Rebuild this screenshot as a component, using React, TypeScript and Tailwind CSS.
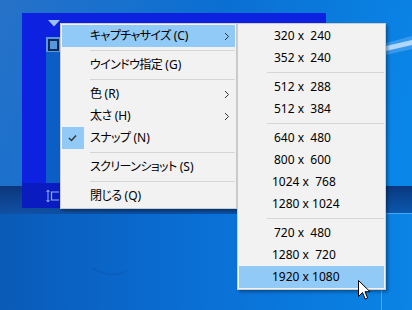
type MenuEntry =
  | { sep: true }
  | { sep?: false; label: string; key?: string; sub?: boolean; active?: boolean; checked?: boolean; pad?: string };

const mainItems: MenuEntry[] = [
  { label: "キャプチャサイズ", key: "(C)", sub: true, active: true },
  { sep: true },
  { label: "ウインドウ指定", key: "(G)" },
  { sep: true },
  { label: "色", key: "(R)", sub: true },
  { label: "太さ", key: "(H)", sub: true },
  { label: "スナップ", key: "(N)", checked: true },
  { sep: true },
  { label: "スクリーンショット", key: "(S)" },
  { sep: true },
  { label: "閉じる", key: "(Q)" },
];

const sizeItems: MenuEntry[] = [
  { label: "320 x  240", pad: "pl-[35px]" },
  { label: "352 x  240", pad: "pl-[35px]" },
  { sep: true },
  { label: "512 x  288", pad: "pl-[35px]" },
  { label: "512 x  384", pad: "pl-[35px]" },
  { sep: true },
  { label: "640 x  480", pad: "pl-[35px]" },
  { label: "800 x  600", pad: "pl-[35px]" },
  { label: "1024 x  768", pad: "pl-[33px]" },
  { label: "1280 x 1024", pad: "pl-[33px]" },
  { sep: true },
  { label: "720 x  480", pad: "pl-[35px]" },
  { label: "1280 x  720", pad: "pl-[33px]" },
  { label: "1920 x 1080", pad: "pl-[33px]", active: true },
];

const menuFont =
  "font-['Noto_Sans','Noto_Sans_CJK_JP',sans-serif] text-[12px] text-black [font-feature-settings:'palt']";

function Separator() {
  return (
    <div className="h-[7px] pl-[28px] pt-[3px]">
      <div className="h-px bg-[#d6d6d6]" />
    </div>
  );
}

function Chevron() {
  return (
    <svg width="6" height="9" viewBox="0 0 6 9" className="mr-[5px] shrink-0">
      <path d="M1 1 L4.5 4.5 L1 8" fill="none" stroke="#333" strokeWidth="1" />
    </svg>
  );
}

function Check() {
  return (
    <div className="flex h-full w-[22px] items-center justify-center bg-[#91c9f7]">
      <svg width="10" height="8" viewBox="0 0 10 8">
        <path d="M1 4 L3.5 6.5 L8 1.5" fill="none" stroke="#333" strokeWidth="1.4" />
      </svg>
    </div>
  );
}

function Label({ text, hotkey }: { text: string; hotkey?: string }) {
  return (
    <>
      <span className="tracking-[-0.6px]">{text}</span>
      {hotkey && <span> {hotkey}</span>}
    </>
  );
}

function Menu({ items, className }: { items: MenuEntry[]; className: string }) {
  return (
    <div
      className={
        "absolute border border-[#cccccc] bg-[#f2f2f2] p-px shadow-[2px_2px_3px_rgba(0,0,0,0.35)] " +
        menuFont +
        " " +
        className
      }
    >
      {items.map((it, i) =>
        it.sep ? (
          <Separator key={i} />
        ) : (
          <div
            key={i}
            className={
              "flex h-[22px] items-center whitespace-pre leading-none " +
              (it.active ? "bg-[#91c9f7]" : "")
            }
          >
            {it.checked ? (
              <>
                <Check />
                <span className="pl-[6px]">
                  <Label text={it.label} hotkey={it.key} />
                </span>
              </>
            ) : it.key ? (
              <span className="pl-[28px]">
                <Label text={it.label} hotkey={it.key} />
              </span>
            ) : (
              <span className={it.pad}>{it.label}</span>
            )}
            <span className="flex-1" />
            {it.sub && <Chevron />}
          </div>
        )
      )}
    </div>
  );
}

function Wallpaper() {
  return (
    <svg className="absolute inset-0" width="412" height="310" viewBox="0 0 412 310">
      <defs>
        <linearGradient id="bg" x1="0" y1="0" x2="1" y2="0.3">
          <stop offset="0" stopColor="#2672c8" />
          <stop offset="0.5" stopColor="#0b6fd2" />
          <stop offset="1" stopColor="#0a86e8" />
        </linearGradient>
        <linearGradient id="band" x1="0" y1="0" x2="0" y2="1">
          <stop offset="0" stopColor="#0a2f72" stopOpacity="0.9" />
          <stop offset="1" stopColor="#0a3a88" stopOpacity="0.6" />
        </linearGradient>
        <linearGradient id="low" x1="0" y1="0" x2="1" y2="0">
          <stop offset="0" stopColor="#0a5ab8" />
          <stop offset="0.5" stopColor="#0a70d6" />
          <stop offset="1" stopColor="#0a84e6" />
        </linearGradient>
      </defs>
      <rect width="412" height="310" fill="url(#bg)" />
      <rect y="214" width="412" height="96" fill="url(#low)" />
      <path d="M92 268 Q112 280 128 270" fill="none" stroke="#0a4ea0" strokeWidth="1.5" opacity="0.3" />
      <rect y="186" width="412" height="28" fill="url(#band)" />
      <path d="M386 46 L412 40 L412 45 L386 51 Z" fill="#d9ecff" opacity="0.9" />
      <path d="M386 43 L412 36 L412 49 L386 55 Z" fill="#8cc4f8" opacity="0.35" />
      <path d="M383 213.5 H412" stroke="#4ba6f4" strokeWidth="1" />
      <path d="M381.5 214 V310" stroke="#4ba6f4" strokeWidth="1" />
    </svg>
  );
}

function CaptureFrame() {
  return (
    <div className="absolute left-[22px] top-[13px] flex h-[195px] w-[304px] flex-col bg-[#0c22e0]">
      <div className="relative h-[24px]">
        <svg className="absolute left-[26px] top-[7px]" width="12" height="7" viewBox="0 0 12 7">
          <path d="M0 0 H12 L6 6.5 Z" fill="#9cc0f2" />
        </svg>
      </div>
      <div className="flex flex-1">
        <div className="w-[24px]" />
        <div className="flex flex-1 flex-col bg-[#0a5ec6]">
          <div className="flex h-[15px] w-[14px] items-center justify-center bg-[#5a98de]">
            <div className="h-[12px] w-[11px] border-2 border-[#0a2a5c]" />
          </div>
        </div>
      </div>
      <div className="flex h-[25px] items-center bg-[#0a1cc0] pl-[24px]">
        <svg width="14" height="14" viewBox="0 0 14 14">
          <path d="M2 1 V13 M0.5 3 L2 1 L3.5 3 M0.5 11 L2 13 L3.5 11" fill="none" stroke="#8ab2f2" strokeWidth="1" />
          <path d="M13 3 H5.5 V11 H13" fill="none" stroke="#8ab2f2" strokeWidth="1.2" />
        </svg>
      </div>
    </div>
  );
}

function Cursor() {
  return (
    <svg className="absolute left-[358px] top-[280px]" width="13" height="21" viewBox="0 0 13 21">
      <path
        d="M0.5 0.5 V16.5 L4.5 12.5 L7.2 19 L9.6 18 L7 11.7 H12 Z"
        fill="#fff"
        stroke="#000"
        strokeWidth="1"
      />
    </svg>
  );
}

export default function App() {
  return (
    <div className="relative h-[310px] w-[412px] overflow-hidden">
      <Wallpaper />
      <CaptureFrame />
      <Menu items={mainItems} className="left-[60px] top-[23px] w-[177px]" />
      <Menu items={sizeItems} className="left-[237px] top-[23px] w-[149px]" />
      <Cursor />
    </div>
  );
}
